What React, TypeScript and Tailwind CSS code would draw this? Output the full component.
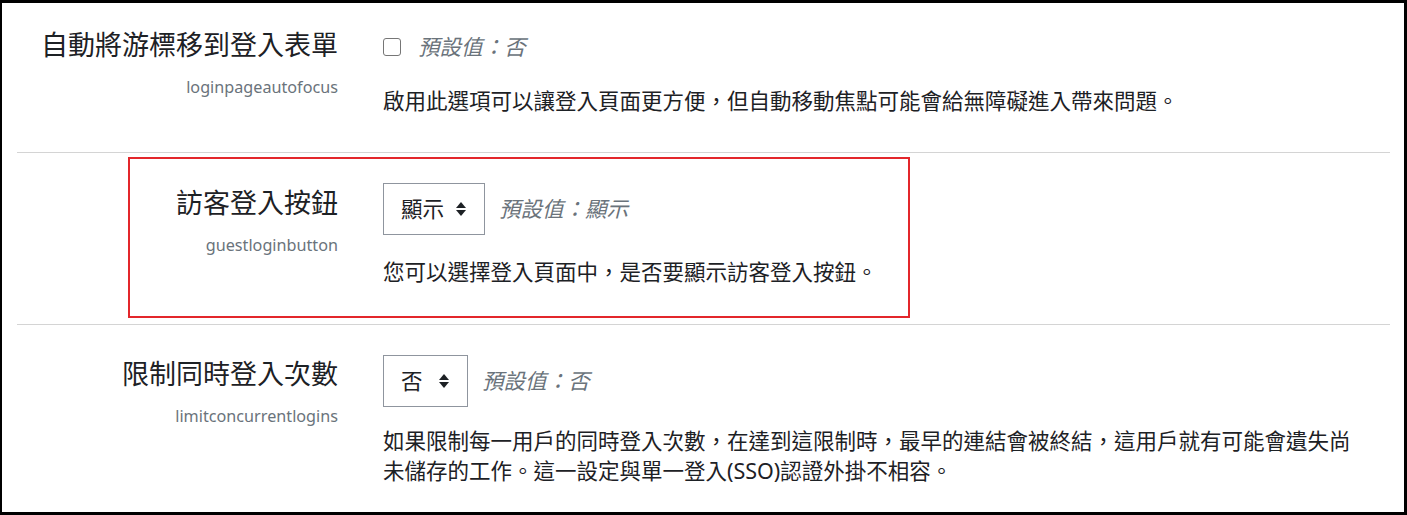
import React from "react";

const font = {
  fontFamily: '"Noto Sans", "Noto Sans CJK TC", sans-serif',
};

function SortIcon() {
  return (
    <svg width="12" height="16" viewBox="0 0 12 16" className="shrink-0">
      <path d="M6 1 L11 7 L1 7 Z" fill="#1d2125" />
      <path d="M6 15 L11 9 L1 9 Z" fill="#1d2125" />
    </svg>
  );
}

function Select({ value, width }: { value: string; width: string }) {
  return (
    <div
      className={`flex items-center justify-between h-[52px] ${width} border border-[#8f959e] bg-white pl-[17px] pr-[17px] text-[21.5px] text-[#1d2125]`}
    >
      <span className="leading-none">{value}</span>
      <SortIcon />
    </div>
  );
}

function Label({ title, sub, pt }: { title: string; sub: string; pt: string }) {
  return (
    <div className={`w-[321px] shrink-0 text-right ${pt}`}>
      <div className="text-[27px] leading-[36px] text-[#1d2125]">{title}</div>
      <div className="mt-[12px] text-[16.2px] leading-[24px] text-[#6a737b]">{sub}</div>
    </div>
  );
}

export default function App() {
  return (
    <div
      className="w-[1407px] h-[515px] bg-white border-t-[3px] border-l-[2px] border-r-[3px] border-b-[3px] border-black pl-[15px] pr-[14px] overflow-hidden"
      style={font}
    >
      {/* Row 1 */}
      <div className="flex gap-[45px] border-b border-[#d4d4d4] h-[150px]">
        <Label title="自動將游標移到登入表單" sub="loginpageautofocus" pt="pt-[24px]" />
        <div className="pt-[29px] flex-1">
          <div className="flex items-center h-[30px] gap-[17px]">
            <div className="w-[18px] h-[18px] rounded-[3px] border border-[#767676] bg-white" />
            <span className="italic text-[21.5px] text-[#6a737b]">預設值：否</span>
          </div>
          <div className="mt-[24px] text-[21.5px] leading-[30px] text-[#1d2125]">
            啟用此選項可以讓登入頁面更方便，但自動移動焦點可能會給無障礙進入帶來問題。
          </div>
        </div>
      </div>

      {/* Row 2 */}
      <div className="relative flex gap-[45px] border-b border-[#d4d4d4] h-[172px]">
        <Label title="訪客登入按鈕" sub="guestloginbutton" pt="pt-[32px]" />
        <div className="pt-[30px] flex-1">
          <div className="flex items-center gap-[14px]">
            <Select value="顯示" width="w-[102px]" />
            <span className="italic text-[21.5px] text-[#6a737b]">預設值：顯示</span>
          </div>
          <div className="mt-[22px] text-[21.5px] leading-[30px] text-[#1d2125]">
            您可以選擇登入頁面中，是否要顯示訪客登入按鈕。
          </div>
        </div>
        <div className="absolute left-[111px] top-[4px] w-[782px] h-[161px] border-2 border-[#e3262b] pointer-events-none" />
      </div>

      {/* Row 3 */}
      <div className="flex gap-[45px]">
        <Label title="限制同時登入次數" sub="limitconcurrentlogins" pt="pt-[31px]" />
        <div className="pt-[30px] flex-1">
          <div className="flex items-center gap-[14px]">
            <Select value="否" width="w-[85px]" />
            <span className="italic text-[21.5px] text-[#6a737b]">預設值：否</span>
          </div>
          <div className="mt-[19px] w-[980px] text-[21.5px] leading-[30px] text-[#1d2125]">
            如果限制每一用戶的同時登入次數，在達到這限制時，最早的連結會被終結，這用戶就有可能會遺失尚未儲存的工作。這一設定與單一登入(SSO)認證外掛不相容。
          </div>
        </div>
      </div>
    </div>
  );
}
